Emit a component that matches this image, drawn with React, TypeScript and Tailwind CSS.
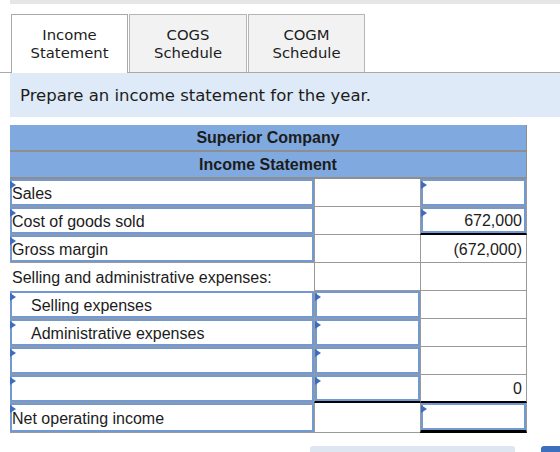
import React from "react";

const SANS = { fontFamily: '"Liberation Sans", Arial, sans-serif' };
const VERDANA = { fontFamily: '"DejaVu Sans", Verdana, sans-serif' };

function Marker() {
  return (
    <svg
      className="absolute left-[-2px] top-[0px]"
      width="6"
      height="8"
      viewBox="0 0 6 8"
    >
      <polygon points="0,0 6,4 0,8" fill="#3d6dc2" />
    </svg>
  );
}

type InputProps = {
  text?: string;
  align?: "left" | "right";
  indent?: boolean;
  marker?: boolean;
};

function InputBox({ text, align = "left", indent, marker = true }: InputProps) {
  return (
    <div
      className={
        "relative box-border h-full w-full border-2 border-[#7399d3] bg-white flex items-center pt-[2px] " +
        (align === "right" ? "justify-end pr-[2px]" : indent ? "pl-[19px]" : "pl-0")
      }
    >
      {marker && <Marker />}
      {text && <span className="leading-none">{text}</span>}
    </div>
  );
}

type CellProps = {
  col: 1 | 2 | 3;
  children?: React.ReactNode;
  bottom?: string;
};

function Cell({ col, children, bottom = "border-b border-[#9a9a9a]" }: CellProps) {
  const width =
    col === 1
      ? "w-[304px]"
      : col === 2
      ? "w-[106px] border-l border-[#9a9a9a]"
      : "w-[107px] border-l border-r border-[#9a9a9a]";
  return (
    <div className={"box-border h-full " + width + " " + bottom}>{children}</div>
  );
}

function Row({ children, h = "h-[28px]" }: { children: React.ReactNode; h?: string }) {
  return <div className={"flex " + h}>{children}</div>;
}

function PlainText({ text, right }: { text: string; right?: boolean }) {
  return (
    <div
      className={
        "h-full flex items-center pt-[2px] " + (right ? "justify-end pr-[4px]" : "pl-[2px]")
      }
    >
      {text}
    </div>
  );
}

export default function App() {
  return (
    <div className="w-[560px] h-[452px] bg-white overflow-hidden text-[#1c1c1c]">
      {/* top strip */}
      <div className="ml-[10px] h-[4px] bg-[#e6e6e6]" />

      {/* tabs */}
      <div
        className="mt-[10px] flex items-end gap-[1px] pl-[11px] border-b border-[#a9a9a9] h-[59px]"
        style={VERDANA}
      >
        <div className="box-border -mb-px h-[59px] w-[117px] shrink-0 border border-b-0 border-[#a9a9a9] bg-white flex flex-col items-center justify-center text-[14.8px] leading-[18px]">
          <span>Income</span>
          <span>Statement</span>
        </div>
        <div className="box-border h-[58px] w-[118px] shrink-0 border border-b-0 border-[#b5b5b5] bg-[#f2f2f2] flex flex-col items-center justify-center text-[14.8px] leading-[18px]">
          <span>COGS</span>
          <span>Schedule</span>
        </div>
        <div className="box-border h-[58px] w-[117px] shrink-0 border border-b-0 border-[#b5b5b5] bg-[#f2f2f2] flex flex-col items-center justify-center text-[14.8px] leading-[18px]">
          <span>COGM</span>
          <span>Schedule</span>
        </div>
      </div>

      {/* instruction */}
      <div
        className="ml-[10px] h-[44px] bg-[#deeaf7] flex items-center pl-[10px] pt-[3px] text-[16.5px]"
        style={VERDANA}
      >
        Prepare an income statement for the year.
      </div>

      {/* statement table */}
      <div className="mt-[8px] ml-[10px] w-[517px] text-[16px]" style={SANS}>
        <div className="box-border h-[27px] border-r border-b-2 border-[#8e8e8e] bg-[#80a9df] flex items-center justify-center pt-[1px] font-bold">
          Superior Company
        </div>
        <div className="box-border h-[27px] border-r border-b-2 border-[#8e8e8e] bg-[#80a9df] flex items-center justify-center pt-[1px] font-bold">
          Income Statement
        </div>

        <Row>
          <Cell col={1}>
            <InputBox text="Sales" />
          </Cell>
          <Cell col={2} />
          <Cell col={3}>
            <InputBox />
          </Cell>
        </Row>
        <Row>
          <Cell col={1}>
            <InputBox text="Cost of goods sold" />
          </Cell>
          <Cell col={2} />
          <Cell col={3} bottom="border-b-2 border-b-black">
            <InputBox text="672,000" align="right" />
          </Cell>
        </Row>
        <Row>
          <Cell col={1}>
            <InputBox text="Gross margin" />
          </Cell>
          <Cell col={2} />
          <Cell col={3}>
            <PlainText text="(672,000)" right />
          </Cell>
        </Row>
        <Row>
          <Cell col={1} bottom="border-b border-transparent">
            <PlainText text="Selling and administrative expenses:" />
          </Cell>
          <Cell col={2} />
          <Cell col={3} />
        </Row>
        <Row>
          <Cell col={1}>
            <InputBox text="Selling expenses" indent />
          </Cell>
          <Cell col={2}>
            <InputBox />
          </Cell>
          <Cell col={3} />
        </Row>
        <Row>
          <Cell col={1}>
            <InputBox text="Administrative expenses" indent />
          </Cell>
          <Cell col={2}>
            <InputBox />
          </Cell>
          <Cell col={3} />
        </Row>
        <Row>
          <Cell col={1}>
            <InputBox />
          </Cell>
          <Cell col={2}>
            <InputBox />
          </Cell>
          <Cell col={3} />
        </Row>
        <Row>
          <Cell col={1}>
            <InputBox />
          </Cell>
          <Cell col={2} bottom="border-b-2 border-b-black">
            <InputBox />
          </Cell>
          <Cell col={3} bottom="border-b-2 border-b-black">
            <PlainText text="0" right />
          </Cell>
        </Row>
        <Row h="h-[30px]">
          <Cell col={1}>
            <InputBox text="Net operating income" />
          </Cell>
          <Cell col={2} />
          <Cell col={3} bottom="border-b-[3px] border-b-black">
            <InputBox />
          </Cell>
        </Row>
      </div>

      {/* action buttons, cut off at the bottom edge */}
      <div className="mt-[13px] flex">
        <div className="ml-[310px] w-[205px] h-[20px] shrink-0 rounded-[3px] bg-[#dde6f1]" />
        <div className="ml-[26px] w-[40px] h-[20px] shrink-0 rounded-[3px] bg-[#3d6fbf]" />
      </div>
    </div>
  );
}
